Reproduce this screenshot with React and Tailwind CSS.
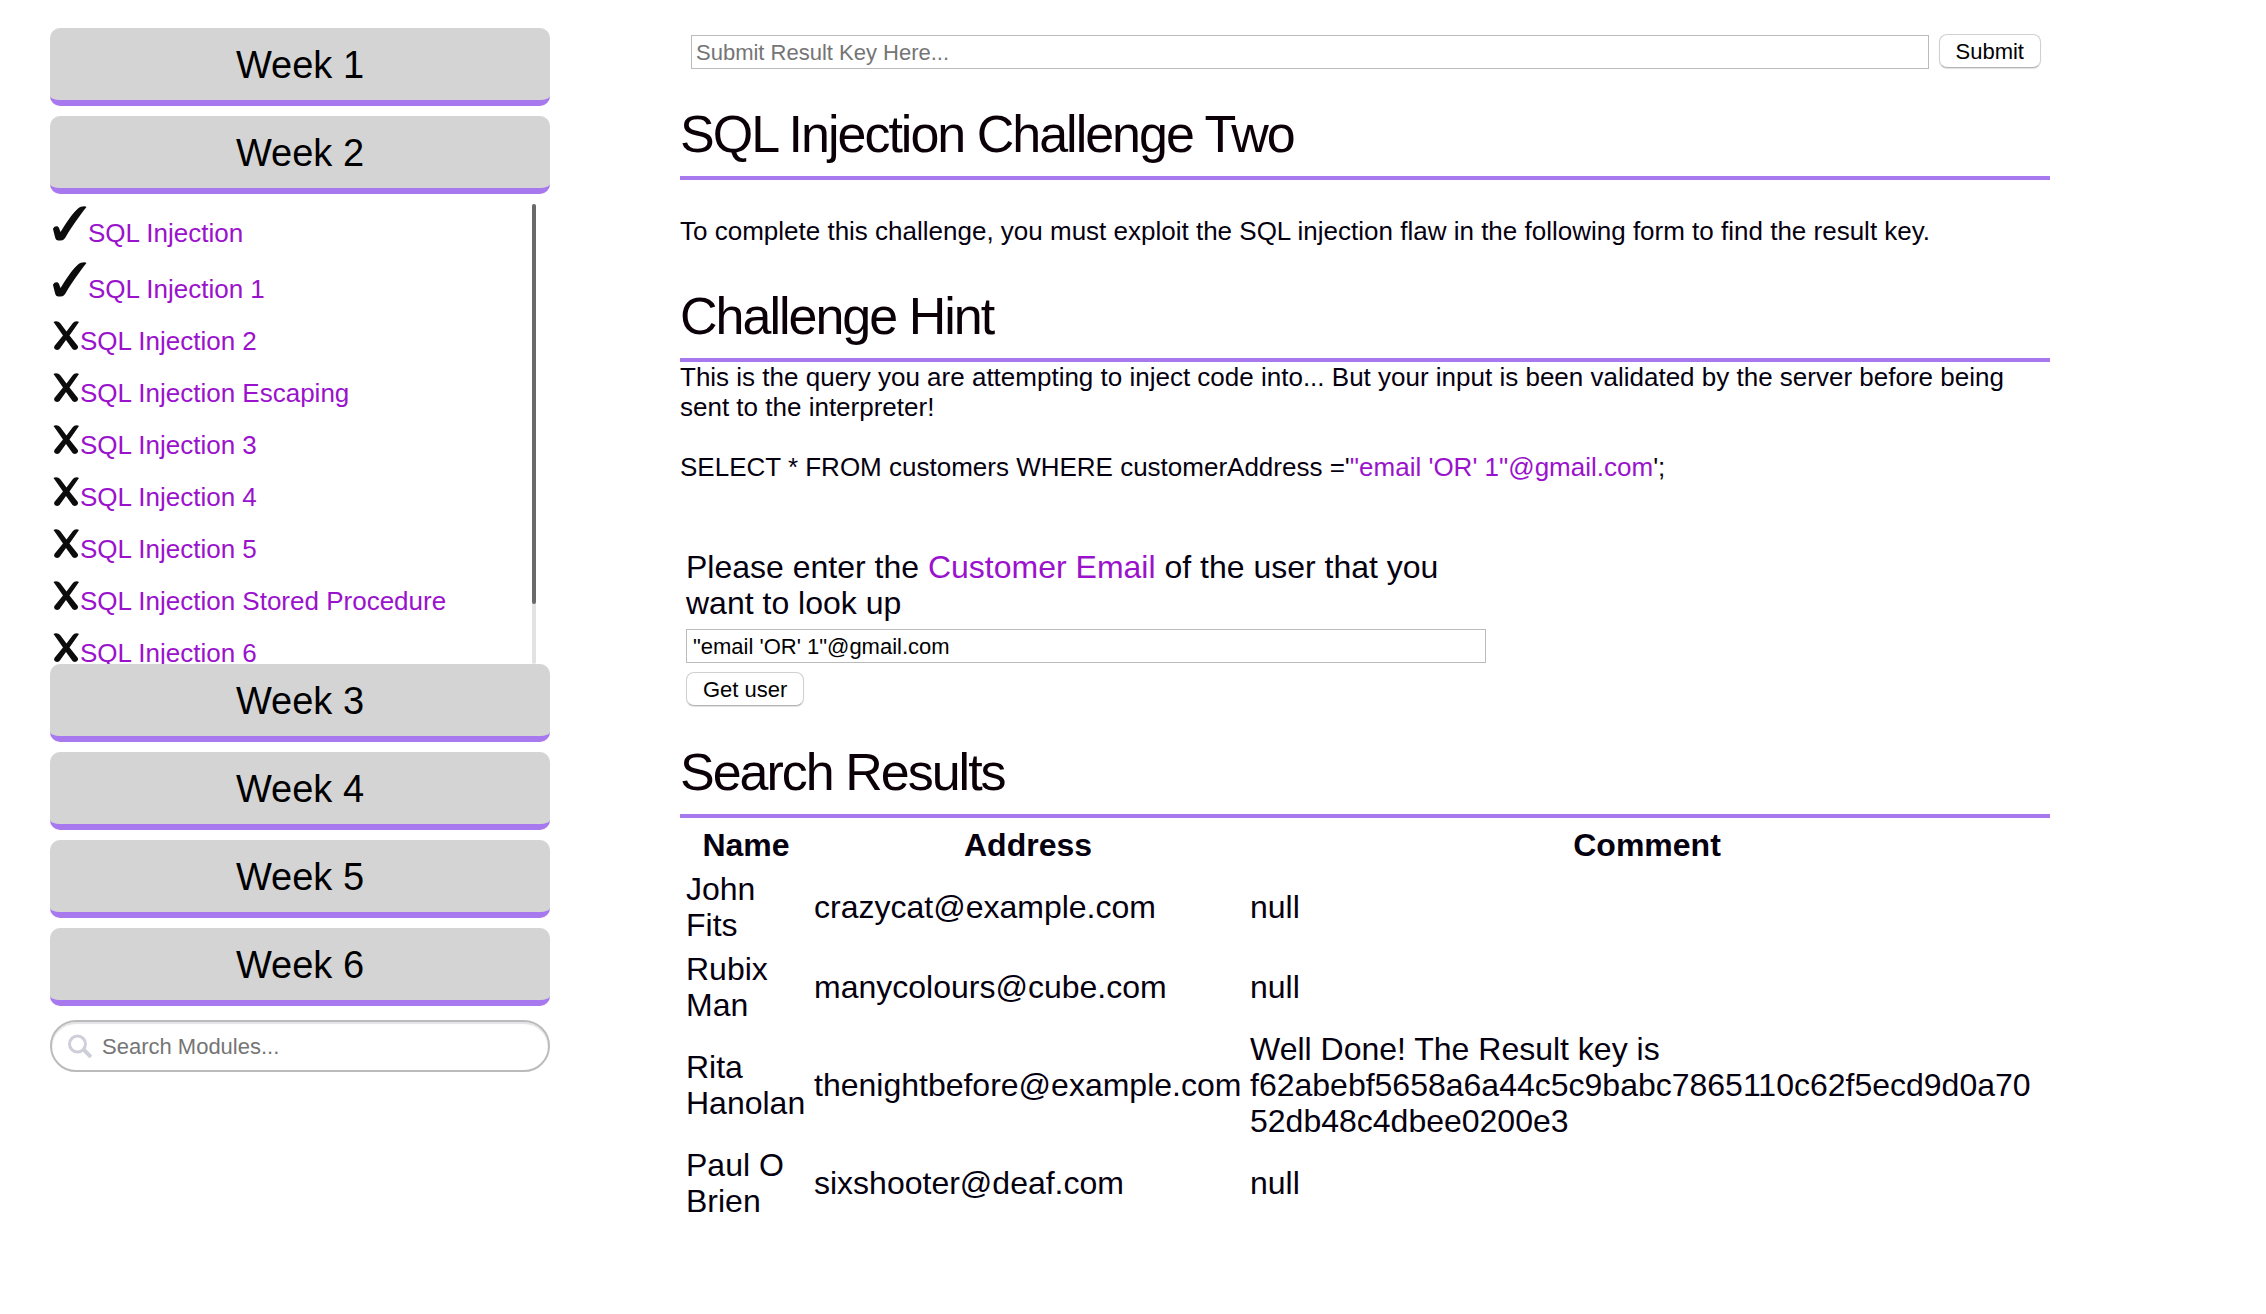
const lessons = [
  { name: "SQL Injection", done: true },
  { name: "SQL Injection 1", done: true },
  { name: "SQL Injection 2" },
  { name: "SQL Injection Escaping" },
  { name: "SQL Injection 3" },
  { name: "SQL Injection 4" },
  { name: "SQL Injection 5" },
  { name: "SQL Injection Stored Procedure" },
  { name: "SQL Injection 6" },
];

const results = [
  { name: "John Fits", address: "crazycat@example.com", comment: "null" },
  { name: "Rubix Man", address: "manycolours@cube.com", comment: "null" },
  {
    name: "Rita Hanolan",
    address: "thenightbefore@example.com",
    comment:
      "Well Done! The Result key is f62abebf5658a6a44c5c9babc7865110c62f5ecd9d0a7052db48c4dbee0200e3",
  },
  { name: "Paul O Brien", address: "sixshooter@deaf.com", comment: "null" },
];

function CheckIcon() {
  return (
    <svg viewBox="0 0 38 38" className="h-[38px] w-[38px] shrink-0 self-start" aria-label="Completed" role="img">
      <path
        d="M3 23 C3.500 20 8 19 9 22 L10.500 26 C15 19 22 7.500 28 2.500 C30.500 0.500 35 -0.500 36.500 1 C31 8 22 20 16 30.500 C14 34 13 34.500 10 34.500 C7 34.500 6 34.500 5 31 Z"
        fill="#0c0c0c"
      />
    </svg>
  );
}

function CrossIcon() {
  return (
    <svg viewBox="0 0 30 38" className="h-[38px] w-[30px] shrink-0 self-start" aria-label="Not completed" role="img">
      <path
        d="M3.500 4 C5.500 2.500 8.500 3 10.500 5.500 L16.500 13.500 L22.500 5.500 C24.500 3 27 2.500 29 4 L19.500 17.500 L27.500 27.500 C29.500 30.500 25.500 33.500 22.500 31 L16 22 L9.500 31 C6.500 33.500 2.500 30.500 4.800 27.500 L13 17.500 Z"
        fill="#0c0c0c"
      />
    </svg>
  );
}

function WeekButton({ week, open = false }) {
  return (
    <button
      type="button"
      aria-expanded={open}
      className="w-full rounded-[10px] border-b-6 border-[#a878ef] bg-[#d4d4d4] pt-[15px] pb-[13px] text-center text-[38px] leading-[44px] text-black"
    >
      Week {week}
    </button>
  );
}

function Heading({ as: Tag = "h2", className = "", children }) {
  return (
    <Tag className={`border-b-4 border-[#a878ef] pb-3 text-[52px] leading-[60px] tracking-[-2px] text-[#0b0008] ${className}`}>
      {children}
    </Tag>
  );
}

function PushButton({ children }) {
  return (
    <button
      type="submit"
      className="h-[34px] rounded-lg border border-[#d0d0d0] border-b-[#b4b4b4] bg-white px-4 pt-0.5 text-[22px] leading-[30px] text-black shadow-[0_1px_1px_rgba(0,0,0,0.12)]"
    >
      {children}
    </button>
  );
}

function Sidebar() {
  return (
    <nav className="w-[500px] shrink-0" aria-label="Modules">
      <div className="flex flex-col gap-2.5">
        <WeekButton week={1} />
        <WeekButton week={2} open />
      </div>
      <div className="mt-2.5 flex h-[460px] pr-3.5">
        <ul className="flex flex-1 flex-col gap-3.5 overflow-hidden pt-0.5">
          {lessons.map((l) => (
            <li key={l.name} className={`flex shrink-0 items-end ${l.done ? "h-[42px]" : "h-[38px]"}`}>
              {l.done ? <CheckIcon /> : <CrossIcon />}
              <a href="#" className="text-[26px] leading-[30px] text-[#9a12cc]">
                {l.name}
              </a>
            </li>
          ))}
        </ul>
        <div className="w-1 rounded-full bg-[#e2e2e2]">
          <div className="h-[400px] rounded-full bg-[#6a6a6a]" />
        </div>
      </div>
      <div className="flex flex-col gap-2.5">
        <WeekButton week={3} />
        <WeekButton week={4} />
        <WeekButton week={5} />
        <WeekButton week={6} />
      </div>
      <label className="mt-3.5 flex h-[52px] items-center gap-2.5 rounded-full border-2 border-[#bbb] px-4 shadow-[inset_0_2px_1px_#e4e4e8]">
        <svg viewBox="0 0 24 24" className="h-6 w-6 shrink-0" fill="none" stroke="#cfcfda" aria-hidden="true">
          <circle cx="9.500" cy="10" r="8" strokeWidth="3" />
          <path d="M16 16 L23 23" strokeWidth="4" />
        </svg>
        <input
          type="text"
          aria-label="Search Modules"
          placeholder="Search Modules..."
          className="min-w-0 flex-1 bg-transparent pt-0.5 text-[22px] leading-[26px] outline-none placeholder:text-[#757575]"
        />
      </label>
    </nav>
  );
}

export default function App() {
  return (
    <div className="flex gap-[130px] bg-white pt-7 pr-[216px] pb-20 pl-[50px] font-['Liberation_Sans',Arial,sans-serif] text-[#05000f]">
      <Sidebar />
      <main className="min-w-0 flex-1 pt-1.5">
        <form className="flex gap-2.5 pr-[9px] pl-[11px]" onSubmit={(e) => e.preventDefault()}>
          <input
            type="text"
            aria-label="Result key"
            placeholder="Submit Result Key Here..."
            className="mt-px h-[34px] min-w-0 flex-1 border border-[#bbb] px-1 pt-0.5 text-[22px] leading-[30px] placeholder:text-[#757575]"
          />
          <PushButton>Submit</PushButton>
        </form>

        <Heading as="h1" className="mt-[35px]">
          SQL Injection Challenge Two
        </Heading>
        <p className="mt-9 text-[26px] leading-[30px]">
          To complete this challenge, you must exploit the SQL injection flaw in the following form to find the result
          key.
        </p>

        <Heading className="mt-10">Challenge Hint</Heading>
        <p className="text-[26px] leading-[30px]">
          This is the query you are attempting to inject code into... But your input is been validated by the server
          before being sent to the interpreter!
        </p>
        <p className="mt-[30px] text-[26px] leading-[30px]">
          SELECT * FROM customers WHERE customerAddress ='
          <span className="text-[#9a12cc]">"email 'OR' 1"@gmail.com</span>';
        </p>

        <form className="mt-[67px] max-w-[806px] pl-1.5" onSubmit={(e) => e.preventDefault()}>
          <label htmlFor="email" className="block text-[32px] leading-9">
            Please enter the <span className="text-[#9a12cc]">Customer Email</span> of the user that you want to look up
          </label>
          <input
            id="email"
            type="text"
            defaultValue={"\"email 'OR' 1\"@gmail.com"}
            className="mt-2 mb-[9px] block h-[34px] w-full border border-[#bbb] px-1.5 pt-0.5 text-[22px] leading-[30px] text-black"
          />
          <PushButton>Get user</PushButton>
        </form>

        <Heading className="mt-9">Search Results</Heading>
        <table className="mt-[3px] w-full table-fixed border-separate border-spacing-1 text-[32px] leading-9">
          <colgroup>
            <col className="w-[124px]" />
            <col className="w-[432px]" />
            <col />
          </colgroup>
          <thead>
            <tr>
              <th className="p-0.5">Name</th>
              <th className="p-0.5">Address</th>
              <th className="p-0.5">Comment</th>
            </tr>
          </thead>
          <tbody>
            {results.map((r) => (
              <tr key={r.name}>
                <td className="p-0.5">{r.name}</td>
                <td className="p-0.5">{r.address}</td>
                <td className="p-0.5 break-words">{r.comment}</td>
              </tr>
            ))}
          </tbody>
        </table>
      </main>
    </div>
  );
}
